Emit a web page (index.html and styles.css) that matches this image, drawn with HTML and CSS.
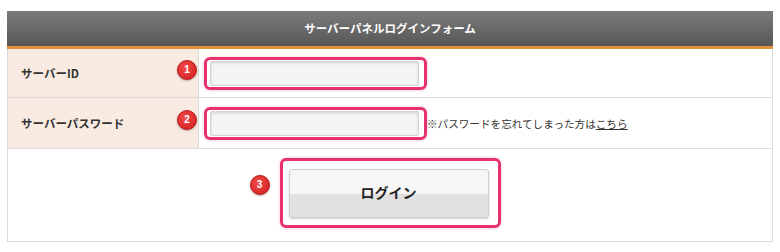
FILE: index.html
```html
<!DOCTYPE html>
<html lang="ja">
<head>
    <meta charset="utf-8" />
    <title>サーバーパネルログインフォーム</title>
    <link rel="stylesheet" href="styles.css">
</head>
<body>

    <div class="login-form">
        <div class="form-head">サーバーパネルログインフォーム</div>

        <div class="form-row row-id">
            <div class="form-label">サーバーID</div>
            <div class="form-field">
                <div class="mark">
                    <span class="badge">1</span>
                    <input type="text" class="text-input">
                </div>
            </div>
        </div>

        <div class="form-row row-pass">
            <div class="form-label">サーバーパスワード</div>
            <div class="form-field">
                <div class="mark">
                    <span class="badge">2</span>
                    <input type="password" class="text-input">
                </div>
                <span class="hint">※パスワードを忘れてしまった方は<a href="#">こちら</a></span>
            </div>
        </div>

        <div class="form-submit">
            <div class="mark mark-btn">
                <span class="badge badge-btn">3</span>
                <button class="login-btn">ログイン</button>
            </div>
        </div>
    </div>

</body>
</html>
```

FILE: styles.css
```css
body {
    margin: 0;
    padding: 11px 0 0 7px;
    font-family: "Noto Sans CJK JP", "Noto Sans", sans-serif;
    background-color: #fff;
    color: #333;
}

.login-form {
    width: 766px;
    border: 1px solid #dcdcdc;
    border-top: none;
    box-sizing: border-box;
}

.form-head {
    height: 35px;
    line-height: 35px;
    background: linear-gradient(#7b7b7b, #575757);
    border-bottom: 3px solid #e2923a;
    color: #fff;
    text-align: center;
    font-size: 11.5px;
    font-weight: bold;
    margin: 0 -1px;
}

.form-row {
    display: grid;
    grid-template-columns: 191px 1fr;
    border-bottom: 1px solid #dcdcdc;
}

.row-id {
    height: 48px;
}

.row-pass {
    height: 50px;
}

.form-label {
    background-color: #f9ebe2;
    border-right: 1px solid #dcdcdc;
    padding-left: 13px;
    display: flex;
    align-items: center;
    font-size: 11.5px;
    font-weight: bold;
    color: #333;
}

.form-field {
    display: flex;
    align-items: center;
    padding-left: 5px;
}

.mark {
    position: relative;
    border: 3px solid #e6336f;
    border-radius: 6px;
    padding: 1px 5px 1px 3px;
    box-shadow: 0 0 3px rgba(230, 51, 111, 0.35);
}

.text-input {
    display: block;
    width: 209px;
    height: 25px;
    box-sizing: border-box;
    border: 1px solid #d4d4d4;
    border-radius: 2px;
    background-color: #f5f5f5;
    box-shadow: inset 0 1px 3px rgba(0, 0, 0, 0.15);
    outline: none;
}

.badge {
    position: absolute;
    left: -30px;
    top: 0;
    width: 18px;
    height: 18px;
    border-radius: 50%;
    background: radial-gradient(circle at 40% 35%, #f04a4a, #d31b1b);
    border: 1px solid #b81515;
    box-shadow: 0 1px 2px rgba(0, 0, 0, 0.3);
    color: #fff;
    font-family: "Liberation Sans", sans-serif;
    font-size: 10px;
    font-weight: bold;
    line-height: 18px;
    text-align: center;
}

.hint {
    font-size: 10.6px;
    color: #333;
}

    .hint a {
        color: #333;
    }

.form-submit {
    display: flex;
    justify-content: center;
    padding: 9px 0 13px;
}

.mark-btn {
    padding: 8px 9px 7px 6px;
}

.badge-btn {
    left: -33px;
    top: 14px;
}

.login-btn {
    display: block;
    width: 200px;
    height: 49px;
    padding: 0 0 4px;
    border: 1px solid #cfcfcf;
    border-radius: 3px;
    background: linear-gradient(#f6f6f6 50%, #e1e1e1 50%);
    box-shadow: 0 1px 2px rgba(0, 0, 0, 0.2);
    font-family: "Noto Sans CJK JP", sans-serif;
    font-size: 14px;
    font-weight: bold;
    color: #222;
    cursor: pointer;
}
```
